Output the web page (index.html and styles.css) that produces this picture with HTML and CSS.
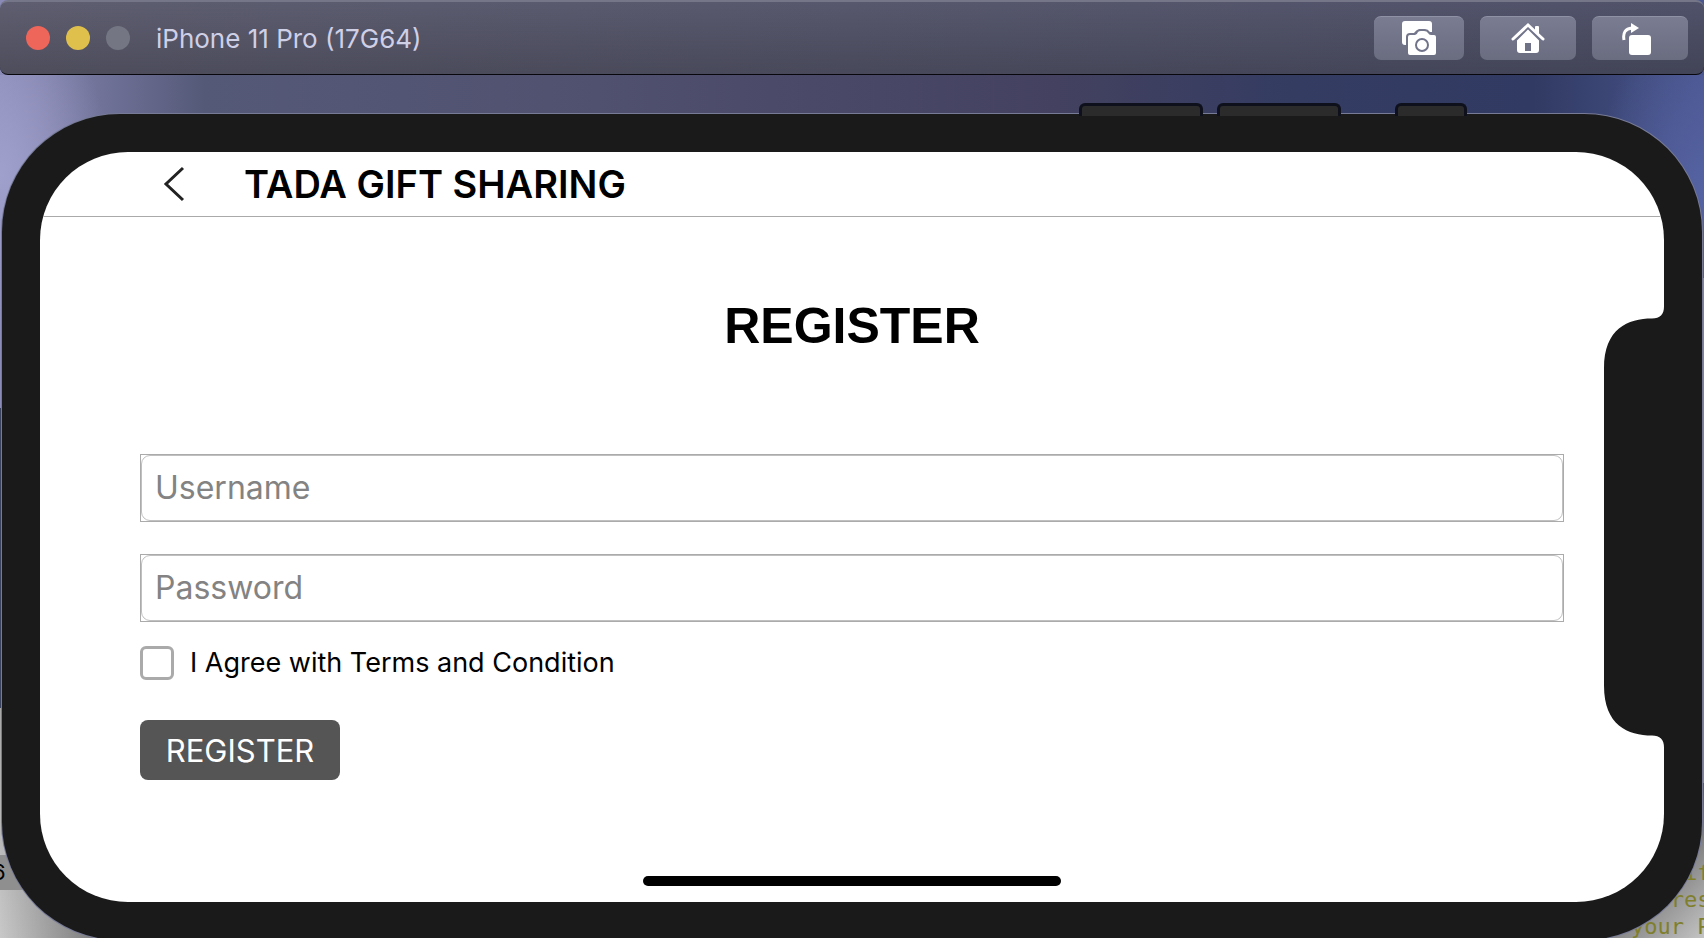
FILE: index.html
```html
<!DOCTYPE html>
<html lang="en">
<head>
<meta charset="utf-8">
<meta name="viewport" content="width=device-width, initial-scale=1">
<title>iPhone 11 Pro (17G64)</title>
<link rel="stylesheet" href="styles.css">
</head>
<body>
<header class="titlebar">
  <div class="lights">
    <button class="light light-close" type="button" aria-label="Close"></button>
    <button class="light light-minimise" type="button" aria-label="Minimise"></button>
    <button class="light light-zoom" type="button" aria-label="Zoom" disabled></button>
  </div>
  <h1 class="window-title">iPhone 11 Pro (17G64)</h1>
  <div class="tools">
    <button class="tool tool-narrow" type="button" aria-label="Screenshot">
      <svg width="36" height="36" viewBox="0 0 36 36" aria-hidden="true">
        <path fill="#fff" d="M4 0H28Q31 0 31 3V11H29Q27 8 24 8H18Q15 9 13 12H9Q5 12 5 16V24H4Q1 24 1 21V3Q1 0 4 0Z"/>
        <path fill="#fff" d="M9 14H14Q16 14 17 11Q18 10 20 10H23Q26 10 27 12Q28 14 30 14H33Q35 14 35 16V32Q35 34 33 34H9Q7 34 7 32V16Q7 14 9 14Z"/>
        <circle cx="21" cy="24" r="6" fill="none" stroke="#707389" stroke-width="2"/>
      </svg>
    </button>
    <button class="tool" type="button" aria-label="Home">
      <svg width="36" height="36" viewBox="0 0 36 36" aria-hidden="true">
        <path fill="#fff" fill-rule="evenodd" d="M18 7L29 18V29Q29 32 26 32H10Q7 32 7 29V18ZM15 22V30H21V22Z"/>
        <path fill="none" stroke="#707389" stroke-width="2" d="M4 21L18 7L32 21"/>
        <path fill="none" stroke="#fff" stroke-width="3" stroke-linecap="round" d="M3 18L18 4L33 18"/>
        <path fill="#fff" d="M25 6Q25 5 26 5H28Q29 5 29 6V14L25 10Z"/>
      </svg>
    </button>
    <button class="tool" type="button" aria-label="Rotate">
      <svg width="36" height="36" viewBox="0 0 36 36" aria-hidden="true">
        <rect x="7" y="14" width="22" height="20" rx="3" fill="#fff"/>
        <path fill="none" stroke="#fff" stroke-width="3" d="M2 19Q0 8 10 7"/>
        <path fill="#fff" d="M9 2L17 7L9 12Z"/>
      </svg>
    </button>
  </div>
</header>

<main class="desktop">
  <div class="gutter" aria-hidden="true">6</div>
  <pre class="code" aria-hidden="true">    if
   res
your P</pre>

  <section class="phone">
    <div class="keys" aria-hidden="true">
      <span class="key"></span>
      <span class="key"></span>
      <span class="key key-power"></span>
    </div>
    <div class="screen">
      <div class="navbar">
        <button class="back" type="button" aria-label="Back">
          <svg width="24" height="36" viewBox="0 0 24 36" aria-hidden="true">
            <path fill="none" stroke="#222" stroke-width="3" d="M21 2L4 18L21 34"/>
          </svg>
        </button>
        <h2 class="app-title">TADA GIFT SHARING</h2>
      </div>
      <form class="form">
        <h3 class="heading">REGISTER</h3>
        <div class="field"><input class="field-input" type="text" placeholder="Username" aria-label="Username"></div>
        <div class="field"><input class="field-input" type="password" placeholder="Password" aria-label="Password"></div>
        <label class="agree"><input class="agree-box" type="checkbox">I Agree with Terms and Condition</label>
        <button class="submit" type="button">REGISTER</button>
      </form>
      <div class="home-indicator"></div>
      <svg class="notch" width="61" height="441" viewBox="0 0 61 441" aria-hidden="true">
        <path fill="#1a1a1a" d="M61 0H60C60 8 56 12 48 12C24 12 0 22 0 62V379C0 419 24 429 48 429C56 429 60 433 60 441H61Z"/>
      </svg>
    </div>
  </section>
</main>
</body>
</html>
```

FILE: styles.css
```css
* { box-sizing: border-box; }

body {
  margin: 0;
  height: 100vh;
  overflow: hidden;
  display: flex;
  flex-direction: column;
  font-family: Inter, "Liberation Sans", sans-serif;
  color: #000;
  background: linear-gradient(90deg, #8b8bb8, #555978 12%, #50516f 35%, #43415f 62%, #343c62 76%, #313a62 90%, #4a568f);
}

h1, h2, h3 { margin: 0; }

button {
  padding: 0;
  border: 0;
  font-family: inherit;
}

.titlebar {
  position: relative;
  z-index: 1;
  flex: none;
  height: 75px;
  padding: 0 16px 0 26px;
  display: flex;
  align-items: center;
  border-top: 2px solid #757789;
  border-bottom: 1px solid #08080c;
  border-radius: 8px;
  background: linear-gradient(#00000000, #0000002e), linear-gradient(90deg, #5e5e70, #50526a);
}

.lights {
  display: flex;
  gap: 16px;
}

.light {
  width: 24px;
  height: 24px;
  border-radius: 50%;
}

.light-close { background: #ee6559; }
.light-minimise { background: #e0c04c; }
.light-zoom { background: #747683; }

.window-title {
  flex: 1;
  padding: 2px 0 0 26px;
  font-size: 26px;
  font-weight: 400;
  line-height: 32px;
  color: #cfcfe6;
}

.tools {
  display: flex;
  gap: 16px;
}

.tool {
  width: 96px;
  height: 44px;
  display: flex;
  align-items: center;
  justify-content: center;
  border-top: 1px solid #8f91a5;
  border-radius: 7px;
  background: linear-gradient(#7a7c92, #6a6c80);
}

.tool-narrow { width: 90px; }

.desktop {
  position: relative;
  flex: 1;
  display: flex;
  padding: 39px 2px 0;
  background:
    linear-gradient(90deg, #00000000, #00000070 110px) left bottom / 110px 155px no-repeat,
    linear-gradient(#a8a8a8, #c8c8c8) left bottom / 50% 230px no-repeat,
    linear-gradient(#3a4460, #3a4460) left bottom / 50% 530px no-repeat,
    linear-gradient(135deg, #555 40%, #c4c4c4) right bottom / 120px 155px no-repeat,
    linear-gradient(#858585, #858585) right bottom / 50% 660px no-repeat,
    radial-gradient(ellipse 110px 180px at 0 100px, #a0a0cc, #a0a0cc00) no-repeat,
    radial-gradient(ellipse 110px 180px at 100% 120px, #5663a3, #5663a300) no-repeat;
}

.gutter {
  position: absolute;
  left: 0;
  bottom: 48px;
  padding: 4px 0;
  width: 32px;
  background: #8f8f8f;
  font-size: 22px;
  line-height: 27px;
  text-indent: -8px;
}

.code {
  position: absolute;
  right: 0;
  bottom: -2px;
  margin: 0;
  width: 73px;
  color: #7f7f2c;
  font-family: "DejaVu Sans Mono", monospace;
  font-size: 22px;
  line-height: 27px;
}

.phone {
  position: relative;
  flex: 1;
  display: flex;
  margin-bottom: -2px;
  padding: 38px;
  border-radius: 118px;
  background: #1a1a1a;
  box-shadow: 0 0 0 1px #777b96;
}

.keys {
  position: absolute;
  top: -11px;
  right: 235px;
  display: flex;
  gap: 14px;
}

.key {
  width: 124px;
  height: 13px;
  border: 3px solid #0e101c;
  border-bottom: 0;
  border-radius: 6px 6px 0 0;
  background: #2b2b2b;
}

.key-power {
  width: 72px;
  margin-left: 40px;
}

.screen {
  position: relative;
  flex: 1;
  display: flex;
  flex-direction: column;
  overflow: hidden;
  border-radius: 88px;
  background: #fff;
}

.navbar {
  display: flex;
  align-items: center;
  gap: 58px;
  height: 65px;
  padding-left: 122px;
  border-bottom: 1px solid #aaa;
}

.back {
  display: flex;
  background: none;
}

.app-title {
  font-size: 38px;
  font-weight: 600;
  line-height: 48px;
}

.form {
  flex: 1;
  display: flex;
  flex-direction: column;
  align-items: flex-start;
  padding: 81px 100px 0;
}

.heading {
  align-self: stretch;
  margin-bottom: 100px;
  text-align: center;
  font-family: "Liberation Sans", Arial, sans-serif;
  font-size: 50px;
  font-weight: 700;
  line-height: 56px;
}

.field {
  align-self: stretch;
  height: 68px;
  margin-bottom: 32px;
  border: 1px solid #ababab;
}

.field + .field { margin-bottom: 24px; }

.field-input {
  display: block;
  width: 100%;
  height: 100%;
  padding: 0 13px 2px;
  border: 1px solid #c0c0c0;
  border-radius: 9px;
  background: #fff;
  font-family: inherit;
  font-size: 32px;
}

.field-input::placeholder {
  color: #838383;
  opacity: 1;
}

.agree {
  display: flex;
  align-items: center;
  gap: 16px;
  margin-bottom: 40px;
  font-size: 27px;
  line-height: 34px;
}

.agree-box {
  appearance: none;
  width: 34px;
  height: 34px;
  margin: 0;
  border: 3px solid #aaa;
  border-radius: 6px;
}

.submit {
  width: 200px;
  height: 60px;
  border-radius: 8px;
  background: #555;
  color: #fff;
  font-size: 31px;
}

.home-indicator {
  align-self: center;
  width: 418px;
  height: 10px;
  margin-bottom: 16px;
  border-radius: 5px;
  background: #000;
}

.notch {
  position: absolute;
  top: 50%;
  right: -1px;
  transform: translateY(-50%);
}
```
